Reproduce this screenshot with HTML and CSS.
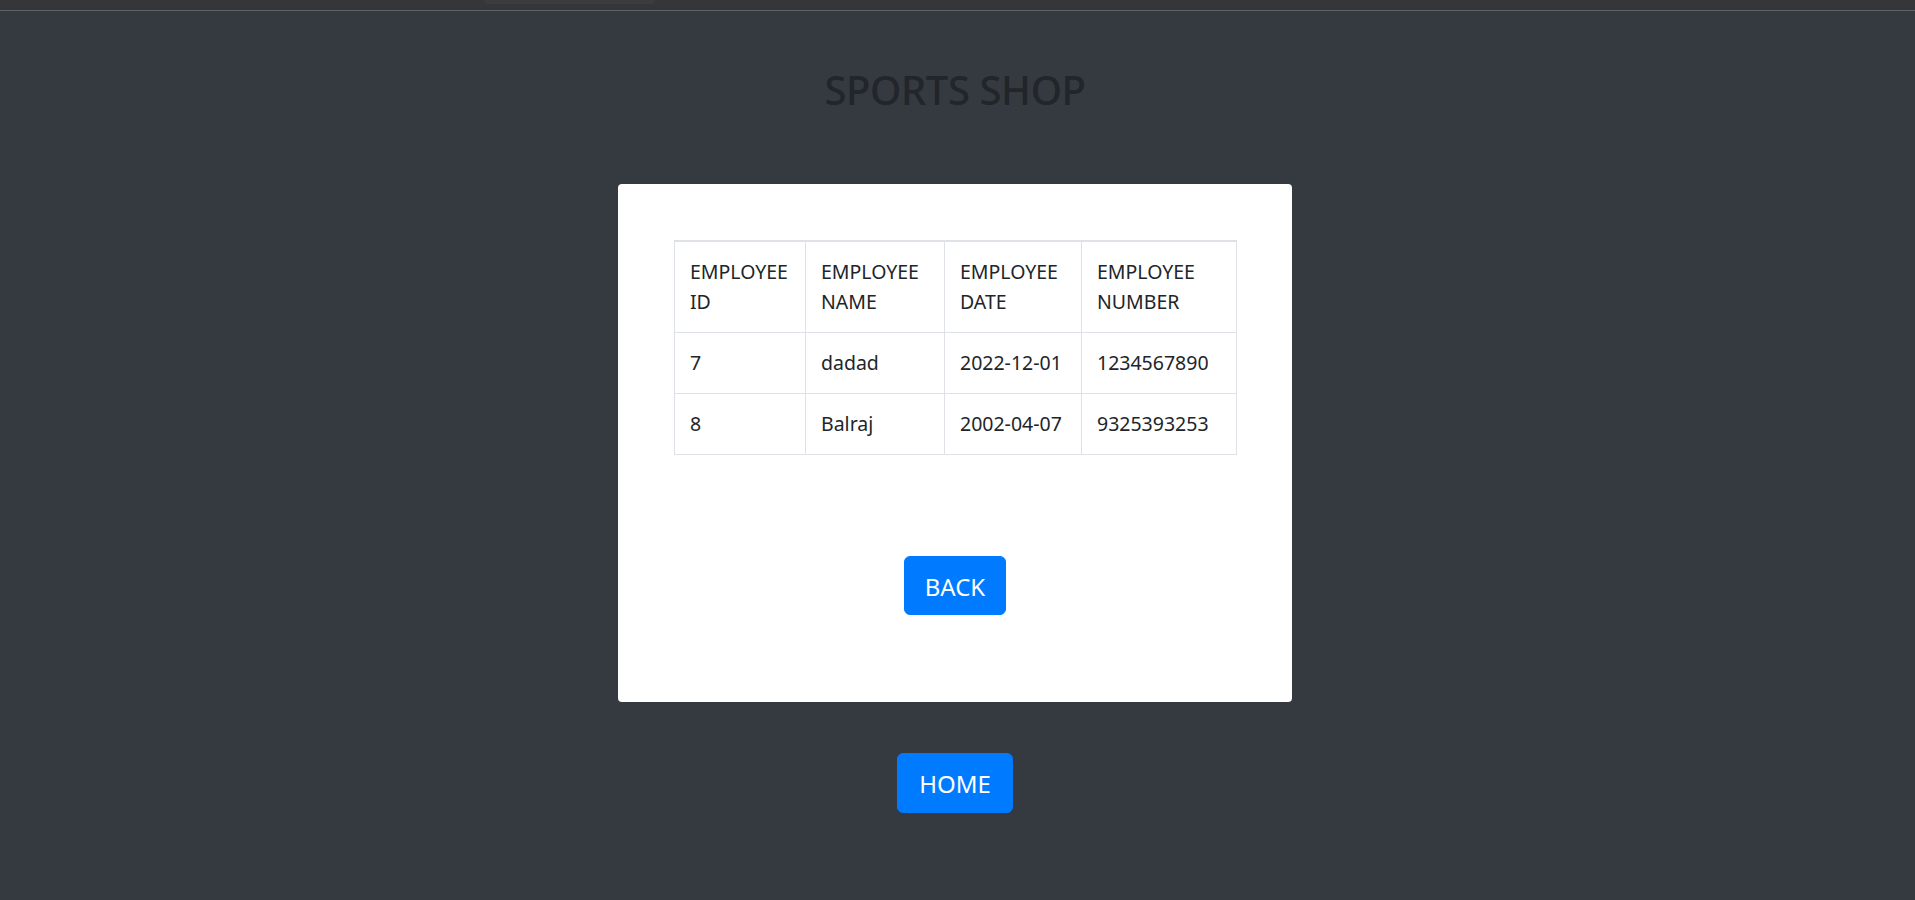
FILE: index.html
```html
<!DOCTYPE html>
<html lang="en">
<head>
<meta charset="utf-8">
<title>Sports Shop</title>
<link rel="stylesheet" href="styles.css">
</head>
<body>
<div class="chrome-strip"><div class="chrome-tab"></div></div>
<main class="page">
  <h1 class="title">SPORTS SHOP</h1>
  <section class="card">
    <table class="emp-table">
      <colgroup>
        <col class="c1"><col class="c2"><col class="c3"><col class="c4">
      </colgroup>
      <thead>
        <tr><th>EMPLOYEE ID</th><th>EMPLOYEE NAME</th><th>EMPLOYEE DATE</th><th>EMPLOYEE NUMBER</th></tr>
      </thead>
      <tbody>
        <tr><td>7</td><td>dadad</td><td>2022-12-01</td><td>1234567890</td></tr>
        <tr><td>8</td><td>Balraj</td><td>2002-04-07</td><td>9325393253</td></tr>
      </tbody>
    </table>
    <div class="card-actions"><a class="btn btn-back" href="#">BACK</a></div>
  </section>
  <div class="page-actions"><a class="btn btn-home" href="#">HOME</a></div>
</main>
</body>
</html>
```

FILE: styles.css
```css
* { box-sizing: border-box; }
html, body { margin: 0; padding: 0; }
body {
  background: #343a40;
  color: #212529;
  font-family: "Noto Sans", "Open Sans", sans-serif;
  min-height: 900px;
}
.chrome-strip {
  height: 11px;
  background: #35363a;
  border-bottom: 1px solid #626366;
  position: relative;
}
.chrome-tab {
  position: absolute;
  left: 484px;
  top: 0;
  width: 171px;
  height: 4px;
  background: #3b3c40;
  border-radius: 0 0 6px 6px;
}
.page {
  display: flex;
  flex-direction: column;
  align-items: center;
  padding-right: 5px;
}
.title {
  margin: 55px 0 0;
  font-size: 40px;
  line-height: 48px;
  font-weight: 500;
  color: #222529;
  letter-spacing: -0.4px;
}
.card {
  margin-top: 70px;
  width: 674px;
  background: #fff;
  border-radius: 4px;
  padding: 56px 56px 87px;
}
.emp-table {
  width: 100%;
  border-collapse: collapse;
  table-layout: fixed;
  font-size: 19.5px;
  line-height: 30px;
  color: #212529;
}
.c1 { width: 131px; }
.c2 { width: 139px; }
.c3 { width: 137px; }
.c4 { width: 155px; }
.emp-table th,
.emp-table td {
  border: 1px solid #dee2e6;
  padding: 15px;
  text-align: left;
  font-weight: 400;
  vertical-align: top;
}
.emp-table thead th {
  border-top: 2px solid #dee2e6;
}
.card-actions {
  margin-top: 101px;
  display: flex;
  justify-content: center;
}
.page-actions {
  margin-top: 51px;
  display: flex;
  justify-content: center;
}
.btn {
  display: inline-block;
  background: #007bff;
  color: #fff;
  text-decoration: none;
  font-size: 24px;
  line-height: 37px;
  border: 1px solid #007bff;
  border-radius: 6px;
}
.btn-back { padding: 11px 20px 9px; }
.btn-home { padding: 11px 21px 10px; }
```
